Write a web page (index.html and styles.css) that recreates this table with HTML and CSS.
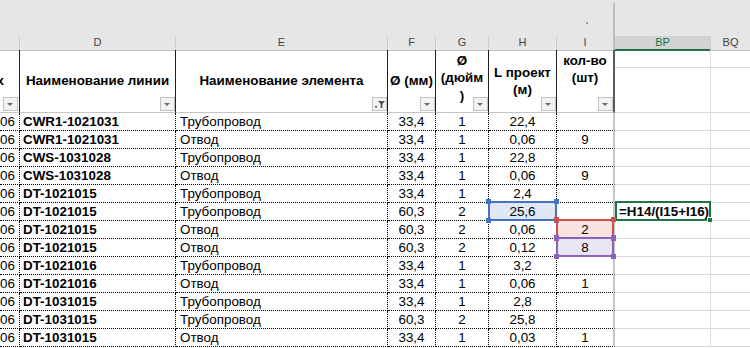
FILE: index.html
```html
<!DOCTYPE html>
<html lang="ru">
<head>
<meta charset="utf-8">
<title>Sheet</title>
<link rel="stylesheet" href="styles.css">
</head>
<body>
<div class="app">
  <div class="topbar"><span class="dot"></span><span class="split"></span></div>
  <div class="letters">
    <div class="lt"></div>
    <div class="lt">D</div>
    <div class="lt">E</div>
    <div class="lt">F</div>
    <div class="lt">G</div>
    <div class="lt">H</div>
    <div class="lt lt-i">I</div>
    <div class="lt lt-sel">BP</div>
    <div class="lt lt-last">BQ</div>
  </div>
  <div class="sheet">
    <div class="hd hd-c">х<span class="fb fb-c"></span></div>
    <div class="hd">Наименование линии<span class="fb"></span></div>
    <div class="hd">Наименование элемента<span class="fb fb-on"><svg width="13" height="12" viewBox="0 0 13 12"><rect x="2" y="8" width="2" height="1.5" fill="#555"/><path d="M5 3h7l-2.6 3v4h-1.8v-4z" fill="#555"/></svg></span></div>
    <div class="hd">Ø (мм)<span class="fb"></span></div>
    <div class="hd hd-up">Ø<br>(дюйм<br>)<span class="fb"></span></div>
    <div class="hd">L проект<br>(м)<span class="fb"></span></div>
    <div class="hd hd-i hd-up">кол-во<br>(шт)<br>&nbsp;<span class="fb"></span></div>
    <div class="g gbp"></div><div class="g"></div>
    <div class="g gbp"></div><div class="g"></div>

    <div class="c cc">2706</div><div class="c cd">CWR1-1021031</div><div class="c ce">Трубопровод</div><div class="c num">33,4</div><div class="c num">1</div><div class="c num">22,4</div><div class="c num ci"></div><div class="g gbp"></div><div class="g"></div>
    <div class="c cc">2706</div><div class="c cd">CWR1-1021031</div><div class="c ce">Отвод</div><div class="c num">33,4</div><div class="c num">1</div><div class="c num">0,06</div><div class="c num ci">9</div><div class="g gbp"></div><div class="g"></div>
    <div class="c cc">2706</div><div class="c cd">CWS-1031028</div><div class="c ce">Трубопровод</div><div class="c num">33,4</div><div class="c num">1</div><div class="c num">22,8</div><div class="c num ci"></div><div class="g gbp"></div><div class="g"></div>
    <div class="c cc">2706</div><div class="c cd">CWS-1031028</div><div class="c ce">Отвод</div><div class="c num">33,4</div><div class="c num">1</div><div class="c num">0,06</div><div class="c num ci">9</div><div class="g gbp"></div><div class="g"></div>
    <div class="c cc">2706</div><div class="c cd">DT-1021015</div><div class="c ce">Трубопровод</div><div class="c num">33,4</div><div class="c num">1</div><div class="c num">2,4</div><div class="c num ci"></div><div class="g gbp"></div><div class="g"></div>
    <div class="c cc">2706</div><div class="c cd">DT-1021015</div><div class="c ce">Трубопровод</div><div class="c num">60,3</div><div class="c num">2</div><div class="c num fill-blue">25,6<span class="sel sel-blue"><i class="h tl"></i><i class="h tr"></i><i class="h bl"></i><i class="h br"></i></span></div><div class="c num ci"></div><div class="g gbp formula">=H14/(I15+I16)<span class="sel sel-green"><i class="h br"></i></span></div><div class="g"></div>
    <div class="c cc">2706</div><div class="c cd">DT-1021015</div><div class="c ce">Отвод</div><div class="c num">60,3</div><div class="c num">2</div><div class="c num">0,06</div><div class="c num ci fill-red">2<span class="sel sel-red"><i class="h tl"></i><i class="h tr"></i><i class="h bl"></i><i class="h br"></i></span></div><div class="g gbp"></div><div class="g"></div>
    <div class="c cc">2706</div><div class="c cd">DT-1021015</div><div class="c ce">Отвод</div><div class="c num">60,3</div><div class="c num">2</div><div class="c num">0,12</div><div class="c num ci fill-purple">8<span class="sel sel-purple"><i class="h tl"></i><i class="h tr"></i><i class="h bl"></i><i class="h br"></i></span></div><div class="g gbp"></div><div class="g"></div>
    <div class="c cc">2706</div><div class="c cd">DT-1021016</div><div class="c ce">Трубопровод</div><div class="c num">33,4</div><div class="c num">1</div><div class="c num">3,2</div><div class="c num ci"></div><div class="g gbp"></div><div class="g"></div>
    <div class="c cc">2706</div><div class="c cd">DT-1021016</div><div class="c ce">Отвод</div><div class="c num">33,4</div><div class="c num">1</div><div class="c num">0,06</div><div class="c num ci">1</div><div class="g gbp"></div><div class="g"></div>
    <div class="c cc">2706</div><div class="c cd">DT-1031015</div><div class="c ce">Трубопровод</div><div class="c num">33,4</div><div class="c num">1</div><div class="c num">2,8</div><div class="c num ci"></div><div class="g gbp"></div><div class="g"></div>
    <div class="c cc">2706</div><div class="c cd">DT-1031015</div><div class="c ce">Трубопровод</div><div class="c num">60,3</div><div class="c num">2</div><div class="c num">25,8</div><div class="c num ci"></div><div class="g gbp"></div><div class="g"></div>
    <div class="c cc">2706</div><div class="c cd">DT-1031015</div><div class="c ce">Отвод</div><div class="c num">33,4</div><div class="c num">1</div><div class="c num">0,03</div><div class="c num ci">1</div><div class="g gbp"></div><div class="g"></div>
  </div>
</div>
</body>
</html>
```

FILE: styles.css
```css
* { box-sizing: border-box; margin: 0; padding: 0; }
html, body { margin: 0; background: #fff; }
body {
  width: 750px;
  height: 348px;
  overflow: hidden;
  font-family: "Liberation Sans", Arial, sans-serif;
  color: #000;
}
.app {
  --cols: 20px 156px 212px 48px 53px 68px 58px 96px 39px;
  width: 750px;
}
.topbar {
  height: 36px;
  background: #e6e6e6;
  display: flex;
}
.dot {
  width: 2px;
  height: 2px;
  background: #9c9c9c;
  margin: 22px 0 0 586px;
}
.split {
  width: 2px;
  margin: 3px 0 0 25px;
  background: #bdbdbd;
}
.letters {
  display: grid;
  grid-template-columns: var(--cols);
  height: 14px;
  background: #e6e6e6;
}
.lt {
  border-right: 1px solid #cbcbcb;
  border-bottom: 1px solid #c3c3c3;
  font-size: 11px;
  line-height: 13px;
  color: #444;
  text-align: center;
}
.lt-i { border-right: 2px solid #bdbdbd; }
.lt-sel {
  background: #d3d3d3;
  color: #217346;
  border-bottom: 2px solid #217346;
}
.lt-last { border-right: none; }

.sheet {
  display: grid;
  grid-template-columns: var(--cols);
  grid-template-rows: 18px 45px repeat(13, 18px);
}
.hd {
  grid-row: span 2;
  position: relative;
  border-right: 1px solid #1f1f1f;
  border-bottom: 1px solid #c6c6c6;
  display: flex;
  align-items: center;
  justify-content: center;
  text-align: center;
  font-weight: bold;
  font-size: 13.4px;
  line-height: 17.5px;
  white-space: nowrap;
}
.hd-c {
  justify-content: flex-end;
  padding-right: 15px;
  overflow: hidden;
}
.hd-up { padding-bottom: 6px; }
.hd-i { border-right: 2px solid #5c5c5c; }
.fb {
  position: absolute;
  right: 0;
  bottom: 1px;
  width: 15px;
  height: 14px;
  background: #f3f3f3;
  border: 1px solid #c2c2c2;
}
.fb::after {
  content: "";
  position: absolute;
  left: 3px;
  top: 5px;
  border-left: 3px solid transparent;
  border-right: 3px solid transparent;
  border-top: 3px solid #6a6a6a;
}
.fb-c { right: 1px; }
.fb-on::after { display: none; }
.fb-on svg { display: block; }
.g {
  border-bottom: 1px solid #dadada;
  position: relative;
}
.gbp { border-right: 1px solid #dadada; }
.c {
  position: relative;
  border-right: 1px dotted #000;
  border-bottom: 1px dotted #000;
  font-size: 13.4px;
  line-height: 17px;
  white-space: nowrap;
}
.cc {
  overflow: hidden;
  text-align: right;
  padding-right: 4px;
  display: flex;
  justify-content: flex-end;
}
.cd { font-weight: bold; padding-left: 3px; }
.ce { padding-left: 4px; }
.num { text-align: center; }
.ci { border-right: 2px solid #c6c6c6; }
.formula {
  font-size: 13.4px;
  line-height: 17px;
  font-weight: bold;
  padding-left: 4px;
  white-space: nowrap;
}
.fill-blue { background: #dfe8f6; }
.fill-red { background: #f8e2e2; }
.fill-purple { background: #e9e5f3; }
.sel {
  position: absolute;
  top: -2px;
  right: -1px;
  bottom: -1px;
  left: -1px;
  border: 2px solid;
  z-index: 2;
}
.sel-blue { border-color: #4472c4; }
.sel-red { border-color: #d0504d; }
.sel-purple { border-color: #8a63c0; z-index: 3; }
.sel-green { border-color: #217346; left: 0; right: -1px; }
.h {
  position: absolute;
  width: 5px;
  height: 5px;
}
.sel-blue .h { background: #4472c4; }
.sel-red .h { background: #d0504d; }
.sel-purple .h { background: #8a63c0; }
.sel-green .h {
  background: #217346;
  border: 1px solid #fff;
  width: 6px;
  height: 6px;
}
.tl { left: -4px; top: -4px; }
.tr { right: -4px; top: -4px; }
.bl { left: -4px; bottom: -4px; }
.br { right: -4px; bottom: -4px; }
```
